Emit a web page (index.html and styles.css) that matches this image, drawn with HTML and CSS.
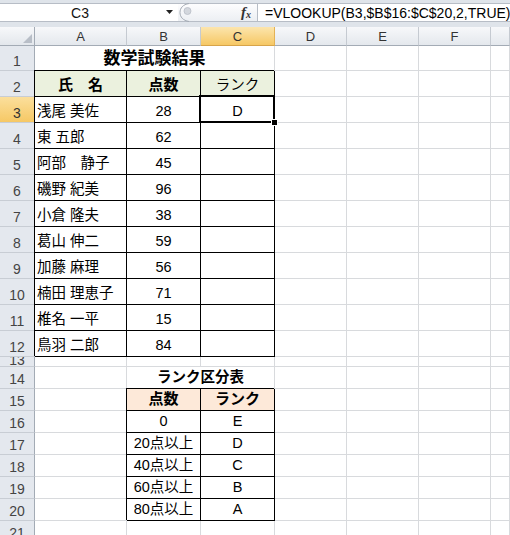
FILE: index.html
```html
<!DOCTYPE html>
<html lang="ja">
<head>
<meta charset="utf-8">
<title>数学試験結果</title>
<link rel="stylesheet" href="styles.css">
</head>
<body>
<div class="fbar">
  <div class="namebox">
    <span class="nm">C3</span>
    <svg class="drop" width="8" height="5" viewBox="0 0 8 5"><path d="M0 0H7L3.5 4Z" fill="#222"/></svg>
  </div>
  <div class="tools">
    <svg class="knob" width="16" height="19" viewBox="0 0 16 19"><path d="M10 0.5C4 1.5 1 5 1 9.5S4 17.5 10 18.5" fill="none" stroke="#a3aab3"/><circle cx="8.5" cy="8" r="3.5" fill="#d3d7dd" stroke="#b9bec6" stroke-width="0.8"/></svg>
    <span class="fx"><i>f</i><span class="fxx">x</span></span>
  </div>
  <div class="formula">=VLOOKUP(B3,$B$16:$C$20,2,TRUE)</div>
</div>
<div class="sheet">
  <div class="corner"><svg class="tri" width="9" height="9" viewBox="0 0 9 9"><path d="M9 0V9H0Z" fill="#b8bec7"/></svg></div>
  <div class="ch">A</div><div class="ch">B</div><div class="ch sel">C</div><div class="ch">D</div><div class="ch">E</div><div class="ch">F</div><div class="ch"></div>

  <div class="rh">1</div><div class="c title">数学試験結果</div><div class="c"></div><div class="c"></div><div class="c"></div><div class="c"></div>

  <div class="rh">2</div><div class="c t hg b ctr">氏　名</div><div class="c t hg b ctr">点数</div><div class="c t hg ctr">ランク</div><div class="c"></div><div class="c"></div><div class="c"></div><div class="c"></div>

  <div class="rh sel">3</div><div class="c t">浅尾 美佐</div><div class="c t ctr">28</div><div class="c t ctr cur">D</div><div class="c"></div><div class="c"></div><div class="c"></div><div class="c"></div>
  <div class="rh">4</div><div class="c t">東 五郎</div><div class="c t ctr">62</div><div class="c t ctr"></div><div class="c"></div><div class="c"></div><div class="c"></div><div class="c"></div>
  <div class="rh">5</div><div class="c t">阿部　静子</div><div class="c t ctr">45</div><div class="c t ctr"></div><div class="c"></div><div class="c"></div><div class="c"></div><div class="c"></div>
  <div class="rh">6</div><div class="c t">磯野 紀美</div><div class="c t ctr">96</div><div class="c t ctr"></div><div class="c"></div><div class="c"></div><div class="c"></div><div class="c"></div>
  <div class="rh">7</div><div class="c t">小倉 隆夫</div><div class="c t ctr">38</div><div class="c t ctr"></div><div class="c"></div><div class="c"></div><div class="c"></div><div class="c"></div>
  <div class="rh">8</div><div class="c t">葛山 伸二</div><div class="c t ctr">59</div><div class="c t ctr"></div><div class="c"></div><div class="c"></div><div class="c"></div><div class="c"></div>
  <div class="rh">9</div><div class="c t">加藤 麻理</div><div class="c t ctr">56</div><div class="c t ctr"></div><div class="c"></div><div class="c"></div><div class="c"></div><div class="c"></div>
  <div class="rh">10</div><div class="c t">楠田 理恵子</div><div class="c t ctr">71</div><div class="c t ctr"></div><div class="c"></div><div class="c"></div><div class="c"></div><div class="c"></div>
  <div class="rh">11</div><div class="c t">椎名 一平</div><div class="c t ctr">15</div><div class="c t ctr"></div><div class="c"></div><div class="c"></div><div class="c"></div><div class="c"></div>
  <div class="rh">12</div><div class="c t">鳥羽 二郎</div><div class="c t ctr">84</div><div class="c t ctr"></div><div class="c"></div><div class="c"></div><div class="c"></div><div class="c"></div>

  <div class="rh short">13</div><div class="c"></div><div class="c"></div><div class="c"></div><div class="c"></div><div class="c"></div><div class="c"></div><div class="c"></div>

  <div class="rh">14</div><div class="c"></div><div class="c title2">ランク区分表</div><div class="c"></div><div class="c"></div><div class="c"></div><div class="c"></div>

  <div class="rh">15</div><div class="c"></div><div class="c t hp b ctr">点数</div><div class="c t hp b ctr">ランク</div><div class="c"></div><div class="c"></div><div class="c"></div><div class="c"></div>
  <div class="rh">16</div><div class="c"></div><div class="c t ctr">0</div><div class="c t ctr">E</div><div class="c"></div><div class="c"></div><div class="c"></div><div class="c"></div>
  <div class="rh">17</div><div class="c"></div><div class="c t ctr">20点以上</div><div class="c t ctr">D</div><div class="c"></div><div class="c"></div><div class="c"></div><div class="c"></div>
  <div class="rh">18</div><div class="c"></div><div class="c t ctr">40点以上</div><div class="c t ctr">C</div><div class="c"></div><div class="c"></div><div class="c"></div><div class="c"></div>
  <div class="rh">19</div><div class="c"></div><div class="c t ctr">60点以上</div><div class="c t ctr">B</div><div class="c"></div><div class="c"></div><div class="c"></div><div class="c"></div>
  <div class="rh">20</div><div class="c"></div><div class="c t ctr">80点以上</div><div class="c t ctr">A</div><div class="c"></div><div class="c"></div><div class="c"></div><div class="c"></div>

  <div class="rh">21</div><div class="c"></div><div class="c"></div><div class="c"></div><div class="c"></div><div class="c"></div><div class="c"></div><div class="c"></div>
</div>
</body>
</html>
```

FILE: styles.css
```css
html, body {
  margin: 0;
  padding: 0;
}
body {
  width: 510px;
  height: 535px;
  overflow: hidden;
  background: #fff;
  font-family: "Liberation Sans", "Noto Sans CJK JP", sans-serif;
  color: #000;
}

/* formula bar */
.fbar {
  display: flex;
  height: 27px;
  box-sizing: border-box;
  padding: 3px 0 5px;
  background: #dfe4ea;
}
.namebox {
  flex: 0 0 178px;
  display: flex;
  align-items: center;
  background: #fff;
  border-top: 1px solid #b7bdc6;
  border-bottom: 1px solid #b7bdc6;
  box-sizing: border-box;
}
.nm {
  width: 160px;
  text-align: center;
  font-size: 14px;
  color: #111;
}
.drop {
  margin-left: 6px;
}
.tools {
  flex: 0 0 79px;
  display: flex;
  align-items: center;
  box-sizing: border-box;
  background: linear-gradient(#fdfdfe, #eceff3);
  border-top: 1px solid #b7bdc6;
  border-bottom: 1px solid #b7bdc6;
}
.knob {
  margin-left: 1px;
}
.fx {
  margin-left: auto;
  margin-right: 6px;
  font-family: "Liberation Serif", serif;
  font-style: italic;
  font-weight: bold;
  font-size: 15px;
  color: #333;
  line-height: 1;
}
.fx i {
  font-style: italic;
}
.fxx {
  font-size: 10px;
  position: relative;
  top: 1px;
}
.formula {
  flex: 1;
  display: flex;
  align-items: center;
  background: #fff;
  border: 1px solid #b7bdc6;
  border-right: none;
  box-sizing: border-box;
  padding-left: 7px;
  font-size: 14px;
  white-space: nowrap;
  overflow: hidden;
  color: #000;
}

/* sheet grid */
.sheet {
  display: grid;
  grid-template-columns: 35px 92px 74px 74px 72px 72px 72px 1fr;
  grid-template-rows: 19px 25px repeat(11, 26px) 10px repeat(8, 22px);
}
.sheet > div {
  box-sizing: border-box;
  min-width: 0;
}
.corner {
  position: relative;
  background: linear-gradient(#f7f8fa, #e3e7ec);
  border-right: 1px solid #a3abb5;
  border-bottom: 1px solid #a3abb5;
}
.tri {
  position: absolute;
  right: 2px;
  bottom: 2px;
}
.ch {
  display: flex;
  align-items: center;
  justify-content: center;
  background: linear-gradient(#f7f8fa, #e4e8ed);
  border-right: 1px solid #c5cad1;
  border-bottom: 1px solid #a3abb5;
  font-size: 13px;
  color: #333;
  padding-top: 1px;
}
.ch.sel {
  background: linear-gradient(#fce5ad, #f6c865);
  border-right-color: #e3b255;
  border-bottom-color: #d7a44a;
}
.rh {
  display: flex;
  align-items: flex-end;
  justify-content: center;
  overflow: hidden;
  background: #e4e8ee;
  border-right: 1px solid #a3abb5;
  border-bottom: 1px solid #c8cdd4;
  font-size: 14px;
  line-height: 16px;
  color: #444;
  padding-bottom: 1px;
}
.rh.short {
  padding-bottom: 0;
  line-height: 12px;
}
.rh.sel {
  background: linear-gradient(#fbdf9c, #f6c865);
  color: #333;
}
.c {
  display: flex;
  align-items: flex-end;
  border-right: 1px solid #d8dadd;
  border-bottom: 1px solid #d8dadd;
  padding: 0 2px 2px;
  font-size: 14.5px;
  line-height: 18px;
  white-space: nowrap;
}
.t {
  border-right-color: #000;
  border-bottom-color: #000;
  box-shadow: -1px -1px 0 #000;
}
.ctr {
  justify-content: center;
}
.b {
  font-weight: bold;
  font-size: 15px;
}
.hg {
  background: #ebf1de;
}
.hp {
  background: #fde9d9;
}
.title {
  grid-column: span 3;
  justify-content: center;
  font-weight: bold;
  font-size: 17px;
  padding-bottom: 2px;
}
.title2 {
  grid-column: span 2;
  justify-content: center;
  font-weight: bold;
  font-size: 14.5px;
}
.cur {
  position: relative;
}
.cur::after {
  content: "";
  position: absolute;
  left: -2px;
  top: -2px;
  right: -1px;
  bottom: -1px;
  border: 2px solid #000;
  box-shadow: inset 0 0 0 1px #fff;
  z-index: 2;
}
.cur::before {
  content: "";
  position: absolute;
  right: -4px;
  bottom: -4px;
  width: 5px;
  height: 5px;
  background: #000;
  border: 1px solid #fff;
  z-index: 3;
}
```
